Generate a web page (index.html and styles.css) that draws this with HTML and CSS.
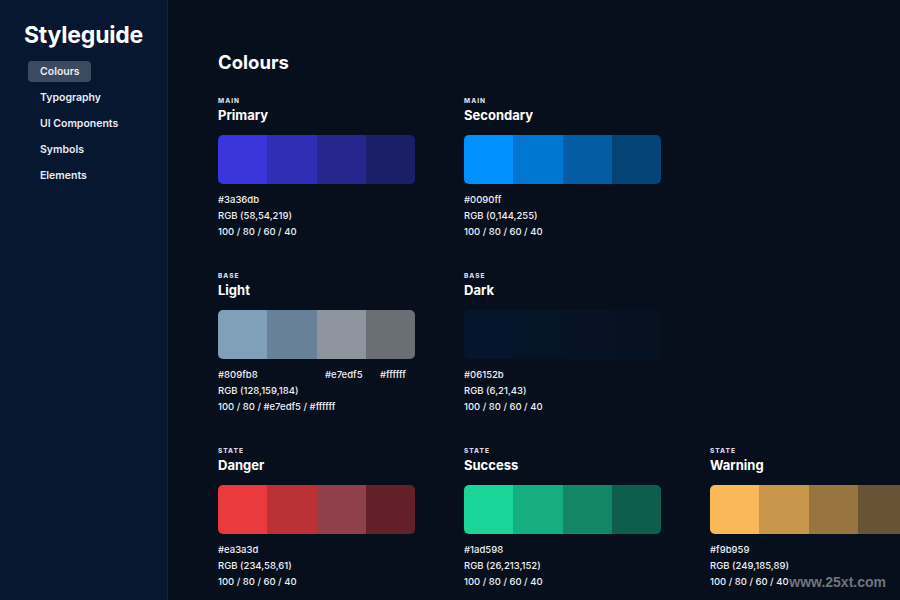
FILE: index.html
```html
<!DOCTYPE html>
<html lang="en">
<head>
    <meta charset="UTF-8">
    <title>Styleguide - Colours</title>
    <link rel="stylesheet" href="styles.css">
</head>
<body>
    <div class="sidebar">
        <h1 class="brand">Styleguide</h1>
        <nav class="nav">
            <a class="nav-item active">Colours</a>
            <a class="nav-item">Typography</a>
            <a class="nav-item">UI Components</a>
            <a class="nav-item">Symbols</a>
            <a class="nav-item">Elements</a>
        </nav>
    </div>

    <div class="main">
        <h2 class="page-title">Colours</h2>

        <div class="palette-grid">
            <div class="palette">
                <div class="palette-label">MAIN</div>
                <div class="palette-name">Primary</div>
                <div class="swatch-bar">
                    <span style="background:#3a36db"></span>
                    <span style="background:rgba(58,54,219,0.8)"></span>
                    <span style="background:rgba(58,54,219,0.6)"></span>
                    <span style="background:rgba(58,54,219,0.4)"></span>
                </div>
                <div class="palette-info">
                    <div>#3a36db</div>
                    <div>RGB (58,54,219)</div>
                    <div>100 / 80 / 60 / 40</div>
                </div>
            </div>

            <div class="palette">
                <div class="palette-label">MAIN</div>
                <div class="palette-name">Secondary</div>
                <div class="swatch-bar">
                    <span style="background:#0090ff"></span>
                    <span style="background:rgba(0,144,255,0.8)"></span>
                    <span style="background:rgba(0,144,255,0.6)"></span>
                    <span style="background:rgba(0,144,255,0.4)"></span>
                </div>
                <div class="palette-info">
                    <div>#0090ff</div>
                    <div>RGB (0,144,255)</div>
                    <div>100 / 80 / 60 / 40</div>
                </div>
            </div>

            <div class="palette empty"></div>

            <div class="palette">
                <div class="palette-label">BASE</div>
                <div class="palette-name">Light</div>
                <div class="swatch-bar">
                    <span style="background:#809fb8"></span>
                    <span style="background:rgba(128,159,184,0.8)"></span>
                    <span style="background:rgba(231,237,245,0.6)"></span>
                    <span style="background:rgba(255,255,255,0.4)"></span>
                </div>
                <div class="palette-info">
                    <div class="info-row">
                        <span class="hex-main">#809fb8</span>
                        <span class="hex-alt">#e7edf5</span>
                        <span>#ffffff</span>
                    </div>
                    <div>RGB (128,159,184)</div>
                    <div>100 / 80 / #e7edf5 / #ffffff</div>
                </div>
            </div>

            <div class="palette">
                <div class="palette-label">BASE</div>
                <div class="palette-name">Dark</div>
                <div class="swatch-bar">
                    <span style="background:#06152b"></span>
                    <span style="background:rgba(6,21,43,0.8)"></span>
                    <span style="background:rgba(6,21,43,0.6)"></span>
                    <span style="background:rgba(6,21,43,0.4)"></span>
                </div>
                <div class="palette-info">
                    <div>#06152b</div>
                    <div>RGB (6,21,43)</div>
                    <div>100 / 80 / 60 / 40</div>
                </div>
            </div>

            <div class="palette empty"></div>

            <div class="palette">
                <div class="palette-label">STATE</div>
                <div class="palette-name">Danger</div>
                <div class="swatch-bar">
                    <span style="background:#ea3a3d"></span>
                    <span style="background:rgba(234,58,61,0.8)"></span>
                    <span style="background:#8f404a"></span>
                    <span style="background:rgba(234,58,61,0.4)"></span>
                </div>
                <div class="palette-info">
                    <div>#ea3a3d</div>
                    <div>RGB (234,58,61)</div>
                    <div>100 / 80 / 60 / 40</div>
                </div>
            </div>

            <div class="palette">
                <div class="palette-label">STATE</div>
                <div class="palette-name">Success</div>
                <div class="swatch-bar">
                    <span style="background:#1ad598"></span>
                    <span style="background:rgba(26,213,152,0.8)"></span>
                    <span style="background:rgba(26,213,152,0.6)"></span>
                    <span style="background:rgba(26,213,152,0.4)"></span>
                </div>
                <div class="palette-info">
                    <div>#1ad598</div>
                    <div>RGB (26,213,152)</div>
                    <div>100 / 80 / 60 / 40</div>
                </div>
            </div>

            <div class="palette">
                <div class="palette-label">STATE</div>
                <div class="palette-name">Warning</div>
                <div class="swatch-bar">
                    <span style="background:#f9b959"></span>
                    <span style="background:rgba(249,185,89,0.8)"></span>
                    <span style="background:rgba(249,185,89,0.6)"></span>
                    <span style="background:rgba(249,185,89,0.4)"></span>
                </div>
                <div class="palette-info">
                    <div>#f9b959</div>
                    <div>RGB (249,185,89)</div>
                    <div>100 / 80 / 60 / 40</div>
                </div>
            </div>
        </div>
    </div>

    <div class="watermark">www.25xt.com</div>
</body>
</html>
```

FILE: styles.css
```css
body { margin: 0; height: 600px; display: flex; overflow: hidden; background: #080f1c; color: #f2f5f9; font-family: Inter, "Noto Sans", sans-serif; position: relative; }

.sidebar { width: 168px; flex-shrink: 0; background: #07172f; border-right: 1px solid #16233a; padding: 20px 0 0 24px; box-sizing: border-box; }
.brand { margin: 0 0 11px 0; font-size: 23px; line-height: 30px; font-weight: 700; letter-spacing: -0.2px; color: #ffffff; }
.nav { display: flex; flex-direction: column; gap: 5px; margin-left: 4px; }
.nav-item { display: block; align-self: flex-start; height: 21px; line-height: 21px; padding: 0 11px 0 12px; border-radius: 4px; font-size: 10.5px; font-weight: 600; color: #e8edf4; }
.nav-item.active { background: #3c4a60; }

.main { flex: 1; overflow: hidden; padding: 50px 0 0 50px; }
.page-title { margin: 0 0 22px 0; font-size: 18.5px; line-height: 24px; font-weight: 700; color: #ffffff; }

.palette-grid { display: grid; grid-template-columns: repeat(3, 197px); column-gap: 49px; row-gap: 31px; width: 689px; }
.palette-label { font-size: 6.5px; line-height: 10px; font-weight: 800; letter-spacing: 1px; color: #d6dce6; }
.palette-name { font-size: 13px; line-height: 18px; font-weight: 700; color: #ffffff; }
.swatch-bar { display: flex; height: 49px; margin-top: 11px; border-radius: 5px; overflow: hidden; }
.swatch-bar span { flex: 1; }
.palette-info { margin-top: 8px; font-size: 9.5px; line-height: 16px; font-weight: 500; color: #eef1f6; }
.info-row { display: flex; }
.hex-main { width: 107px; }
.hex-alt { width: 55px; }

.watermark { position: absolute; right: 14px; bottom: 10px; font-size: 14px; font-weight: 700; color: rgba(200,205,212,0.55); font-family: "Liberation Sans", sans-serif; }
```
